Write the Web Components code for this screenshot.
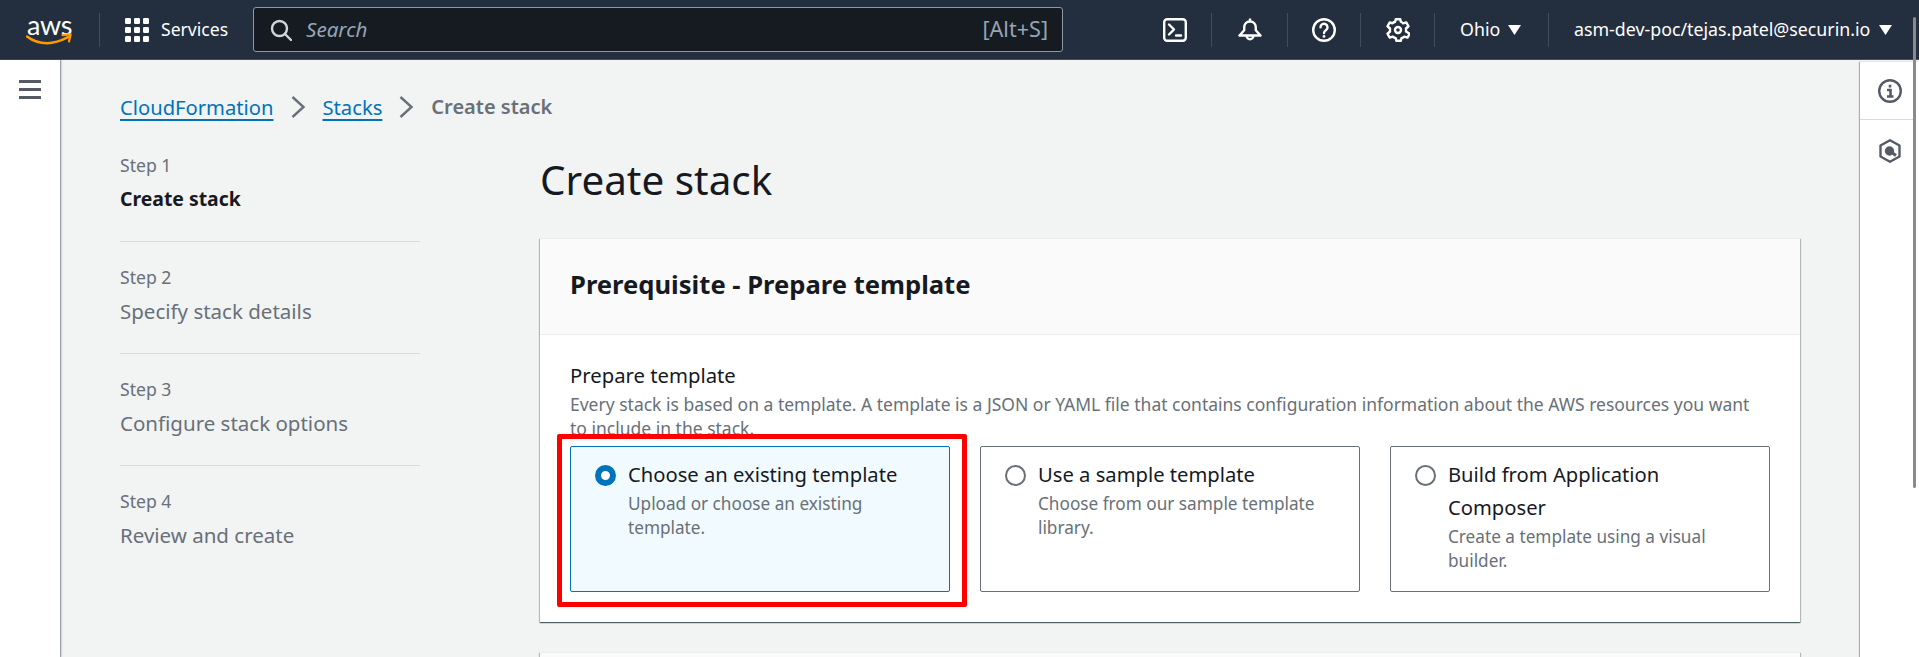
<!DOCTYPE html>
<html lang="en">
<head>
<meta charset="utf-8">
<title>Create stack</title>
<style>
  html, body { margin: 0; height: 100%; overflow: hidden; }
  body { font-family: "Noto Sans", "Open Sans", sans-serif; color: #16191f; background: #f2f3f3; }
  .shell { display: flex; flex-direction: column; height: 657px; position: relative; }
  .row { display: flex; flex: 1; min-height: 0; }
</style>
</head>
<body>
<div class="shell">
  <aws-top-nav></aws-top-nav>
  <div class="row">
    <aws-side-rail></aws-side-rail>
    <aws-page>
      <aws-breadcrumbs slot="crumbs" items="CloudFormation,Stacks" current="Create stack"></aws-breadcrumbs>
      <aws-steps slot="steps"></aws-steps>
      <aws-card heading="Prerequisite - Prepare template">
        <aws-field label="Prepare template" description="Every stack is based on a template. A template is a JSON or YAML file that contains configuration information about the AWS resources you want to include in the stack.">
          <aws-tile checked marked title-text="Choose an existing template" description="Upload or choose an existing template."></aws-tile>
          <aws-tile title-text="Use a sample template" description="Choose from our sample template library."></aws-tile>
          <aws-tile title-text="Build from Application Composer" description="Create a template using a visual builder."></aws-tile>
        </aws-field>
      </aws-card>
      <aws-card stub></aws-card>
    </aws-page>
    <aws-tools-rail></aws-tools-rail>
  </div>
  <aws-scroll-thumb></aws-scroll-thumb>
</div>

<script>
(() => {
  const define = (name, css, html, setup) => {
    const template = document.createElement('template');
    template.innerHTML = `<style>${css}</style>${html}`;
    customElements.define(name, class extends HTMLElement {
      constructor() {
        super();
        this.attachShadow({ mode: 'open' }).append(template.content.cloneNode(true));
      }
      connectedCallback() {
        if (setup) setup(this, this.shadowRoot);
      }
    });
  };

  const attr = (el, name) => el.getAttribute(name) || '';

  define('aws-top-nav', `
    :host { display: flex; align-items: center; flex: none; height: 60px; box-sizing: border-box; background: #232f3e; color: #fff; font-size: 17.8px; border-bottom: 1px solid #414d5c; }
    * { box-sizing: border-box; }
    .cell { display: flex; align-items: center; justify-content: center; height: 34px; flex: none; border-left: 1px solid #414d5c; }
    .logo { width: 99px; height: 34px; flex: none; position: relative; display: block; }
    .logo span { position: absolute; left: 27px; top: -8px; font: 400 27px/40px "Lato", "Noto Sans", sans-serif; letter-spacing: -.4px; }
    .logo svg { position: absolute; left: 26px; top: 20px; }
    .services { width: 154px; justify-content: flex-start; padding-left: 25px; gap: 12px; }
    .services span { line-height: 24px; font-size: 17.6px; margin-bottom: 2px; }
    .search { width: 810px; height: 45px; flex: none; display: flex; align-items: center; background: #161b22; border: 1px solid #8d99a8; border-radius: 3px; padding: 0 14px 0 16px; font-size: 20.6px; color: #95a5b5; }
    .search svg { flex: none; margin-right: 14px; }
    .search em { flex: 1; margin-bottom: 2px; }
    .search span { font-size: 21.6px; margin-bottom: 2px; }
    .icons { display: flex; margin-left: 100px; align-items: center; }
    .icons .first { border-left: 0; width: 48px; justify-content: flex-start; padding-left: 0; }
    svg { display: block; }
    .region { width: 114px; gap: 8px; justify-content: flex-start; padding-left: 25px; }
    .user { width: 365px; gap: 9px; justify-content: flex-start; padding-left: 25px; white-space: nowrap; }
    .region span, .user span { margin-bottom: 2px; }
    .caret { width: 13px; height: 10px; flex: none; }
  `, `
    <a class="logo"><span>aws</span>
      <svg width="46" height="16" viewBox="0 0 46 16" fill="none"><path d="M1 3.500C8 8.800 14.500 10.200 21 10.200 27.500 10.200 34 8.400 42 4.200" stroke="#f90" stroke-width="2.600" stroke-linecap="round"/><path d="M36.500 2.200 44.600 1.400 43 8.400" stroke="#f90" stroke-width="2.200" stroke-linecap="round" stroke-linejoin="round"/></svg>
    </a>
    <div class="cell services">
      <svg width="24" height="24" viewBox="0 0 24 24" fill="#fff"><rect x="0" y="0" width="6" height="6" rx="1.2"/><rect x="9" y="0" width="6" height="6" rx="1.2"/><rect x="18" y="0" width="6" height="6" rx="1.2"/><rect x="0" y="9" width="6" height="6" rx="1.2"/><rect x="9" y="9" width="6" height="6" rx="1.2"/><rect x="18" y="9" width="6" height="6" rx="1.2"/><rect x="0" y="18" width="6" height="6" rx="1.2"/><rect x="9" y="18" width="6" height="6" rx="1.2"/><rect x="18" y="18" width="6" height="6" rx="1.2"/></svg>
      <span>Services</span>
    </div>
    <div class="search">
      <svg width="22" height="22" viewBox="0 0 22 22" fill="none" stroke="#d1d5db" stroke-width="2.400" stroke-linecap="round"><circle cx="9.500" cy="9.500" r="7.500"/><path d="M15 15l6 6"/></svg>
      <em>Search</em><span>[Alt+S]</span>
    </div>
    <div class="icons">
      <div class="cell first"><svg width="24" height="24" viewBox="0 0 24 24" fill="none" stroke="#fff" stroke-width="2.400" stroke-linecap="round" stroke-linejoin="round"><rect x="1.200" y="1.200" width="21.600" height="21.600" rx="3"/><path d="M6 6.500l5 5-5 5M13 17.500h5"/></svg></div>
      <div class="cell" style="width:76px"><svg width="24" height="24" viewBox="0 0 24 24" fill="none" stroke="#fff" stroke-width="2.400" stroke-linejoin="round"><path d="M12 .5v3M12 3.500c-3.600 0-5.800 2.600-5.800 6.200v2.500L1.500 17.500h21l-4.700-5.300V9.700c0-3.600-2.200-6.200-5.800-6.200z"/><path d="M8.600 17.800a3.400 3.400 0 1 0 6.800 0"/></svg></div>
      <div class="cell" style="width:73px"><svg width="24" height="24" viewBox="0 0 24 24" fill="none" stroke="#fff" stroke-width="2.400" stroke-linecap="round"><circle cx="12" cy="12" r="10.800"/><path d="M8.500 9.300a3.500 3.500 0 1 1 5.600 2.800c-1.300.9-2.100 1.500-2.100 3"/><path d="M12 18.300v.1" stroke-width="2.800"/></svg></div>
      <div class="cell" style="width:74px"><svg width="24" height="24" viewBox="0 0 16 16" fill="none" stroke="#fff" stroke-width="1.600" stroke-linejoin="round"><circle cx="8" cy="8" r="2"/><path d="M13.400 8c0-.34-.03-.67-.09-1L15 5.500l-1.500-2.600-2.100.63A5.500 5.500 0 0 0 9.900 2.500L9.500.8h-3L6.100 2.500c-.7.2-1.300.6-1.900 1L2.500 2.900 1 5.500 2.700 7a5.700 5.700 0 0 0 0 2L1 10.500l1.500 2.600 2.100-.63c.6.500 1.200.8 1.900 1l.4 1.700h3l.4-1.700c.7-.2 1.300-.5 1.900-1l2.100.63 1.500-2.600L13.300 9c.06-.33.1-.66.1-1z"/></svg></div>
      <div class="cell region"><span>Ohio</span><svg class="caret" viewBox="0 0 13 10" fill="#fff"><path d="M0 0h13L6.500 10z"/></svg></div>
      <div class="cell user"><span>asm-dev-poc/tejas.patel@securin.io</span><svg class="caret" viewBox="0 0 13 10" fill="#fff"><path d="M0 0h13L6.500 10z"/></svg></div>
    </div>
  `);

  define('aws-side-rail', `
    :host { display: block; flex: none; width: 60px; background: #fff; box-shadow: 1px 0 1px rgba(0,28,36,.3), 2px 0 2px rgba(0,28,36,.1); position: relative; z-index: 1; padding-top: 20px; box-sizing: border-box; }
    svg { display: block; margin-left: 19px; }
  `, `<svg width="22" height="20" viewBox="0 0 22 20" fill="#545b64"><rect y="0" width="22" height="3"/><rect y="8" width="22" height="3"/><rect y="16" width="22" height="3"/></svg>`);

  define('aws-page', `
    :host { display: grid; flex: 1; min-width: 0; grid-template-columns: 300px 1260px; column-gap: 120px; grid-template-rows: auto 1fr; padding: 0 60px; overflow: hidden; box-sizing: border-box; align-content: start; }
    .crumbs { grid-column: 1 / -1; }
    h1 { margin: 0; font-size: 40.4px; font-weight: 400; line-height: 48px; padding-top: 22px; height: 82px; color: #16191f; }
    .steps { min-width: 0; }
  `, `
    <div class="crumbs"><slot name="crumbs"></slot></div>
    <div class="steps"><slot name="steps"></slot></div>
    <div class="main"><h1>Create stack</h1><slot></slot></div>
  `);

  define('aws-breadcrumbs', `
    :host { display: flex; align-items: center; height: 54px; padding-top: 20px; font-size: 20.2px; line-height: 28px; }
    a { color: #0073bb; text-decoration: underline; text-underline-offset: 4px; text-decoration-thickness: 2px; }
    svg { margin: 0 17px; flex: none; display: block; }
    b { color: #687078; font-weight: 600; font-size: 20px; }
  `, `<span id="list" style="display:contents"></span>`, (el, root) => {
    const list = root.getElementById('list');
    const chevron = '<svg width="15" height="22" viewBox="0 0 15 22" fill="none" stroke="#687078" stroke-width="2.400"><path d="M1.500 1l11 10-11 10"/></svg>';
    const items = attr(el, 'items').split(',');
    list.innerHTML = items.map((item) => `<a>${item}</a>${chevron}`).join('') + `<b>${attr(el, 'current')}</b>`;
  });

  define('aws-steps', `
    :host { display: block; padding-top: 19px; }
    .step { height: 112px; padding-top: 23px; box-sizing: border-box; border-bottom: 1px solid #d5dbdb; }
    .step.active { height: 89px; padding-top: 0; }
    .step:last-child { border-bottom: 0; }
    small { display: block; font-size: 17.6px; line-height: 24px; color: #687078; padding-bottom: 8px; }
    span { display: block; font-size: 20.5px; line-height: 28px; color: #687078; }
    .active span { color: #16191f; font-weight: 700; font-size: 19.4px; }
  `, `
    <div class="step active"><small>Step 1</small><span>Create stack</span></div>
    <div class="step"><small>Step 2</small><span>Specify stack details</span></div>
    <div class="step"><small>Step 3</small><span>Configure stack options</span></div>
    <div class="step"><small>Step 4</small><span>Review and create</span></div>
  `);

  define('aws-card', `
    :host { display: block; background: #fff; border-top: 1px solid #eaeded; box-shadow: 0 1px 1px 0 rgba(0,28,36,.5), 1px 1px 1px 0 rgba(0,28,36,.2), -1px 1px 1px 0 rgba(0,28,36,.2); margin-bottom: 30px; }
    header { background: #fafafa; border-bottom: 1px solid #eaeded; height: 96px; box-sizing: border-box; padding: 0 30px 4px; display: flex; align-items: center; }
    h2 { margin: 0; font-size: 25.6px; line-height: 30px; font-weight: 700; color: #16191f; }
    .body { padding: 23px 30px 30px; }
    :host([stub]) { height: 60px; }
    :host([stub]) header { height: 60px; }
  `, `<header><h2></h2></header><div class="body"><slot></slot></div>`, (el, root) => {
    root.querySelector('h2').textContent = attr(el, 'heading');
    if (el.hasAttribute('stub')) root.querySelector('.body').remove();
  });

  define('aws-field', `
    :host { display: block; }
    label { display: block; font-size: 20.3px; line-height: 34px; color: #16191f; }
    p { margin: 0; font-size: 17.5px; line-height: 24px; color: #687078; }
    .tiles { display: grid; grid-template-columns: repeat(3, 1fr); column-gap: 30px; margin-top: 6px; }
  `, `<label></label><p></p><div class="tiles"><slot></slot></div>`, (el, root) => {
    root.querySelector('label').textContent = attr(el, 'label');
    root.querySelector('p').textContent = attr(el, 'description');
  });

  define('aws-tile', `
    :host { display: flex; position: relative; box-sizing: border-box; height: 146px; padding: 11px 24px 0; gap: 12px; border: 1px solid #687078; border-radius: 2px; background: #fff; }
    :host([checked]) { border-color: #0073bb; background: #f1faff; }
    .radio { flex: none; width: 21px; height: 21px; margin-top: 7px; box-sizing: border-box; border: 2px solid #687078; border-radius: 50%; background: #fff; }
    :host([checked]) .radio { border: 6px solid #0073bb; }
    .title { font-size: 20.2px; line-height: 33px; color: #16191f; }
    .desc { font-size: 17.2px; line-height: 24px; color: #687078; margin-top: 1px; }
    .mark { position: absolute; left: -14px; right: -18px; top: -13px; bottom: -16px; border: 5px solid #f00; border-radius: 2px; pointer-events: none; }
  `, `<div class="radio"></div><div><div class="title"></div><div class="desc"></div></div>`, (el, root) => {
    root.querySelector('.title').textContent = attr(el, 'title-text');
    root.querySelector('.desc').textContent = attr(el, 'description');
    if (el.hasAttribute('marked')) {
      const mark = document.createElement('div');
      mark.className = 'mark';
      root.append(mark);
    }
  });

  define('aws-tools-rail', `
    :host { display: block; flex: none; width: 59px; background: #fff; margin-top: 2px; box-shadow: -1px 0 1px rgba(0,28,36,.3); position: relative; z-index: 1; }
    div { height: 58px; display: flex; align-items: center; padding-left: 18px; box-sizing: border-box; }
    .info { border-bottom: 1px solid #d5dbdb; margin-right: 5px; }
    div + div { height: 62px; }
    svg { display: block; }
  `, `
    <div class="info"><svg width="24" height="24" viewBox="0 0 24 24" fill="none" stroke="#545b64" stroke-width="2.400"><circle cx="12" cy="12" r="10.800"/><path d="M12 5.800v2.800M9 11h3.500v6.500M9 17.500h6.500" stroke-width="2.600"/></svg></div>
    <div><svg width="24" height="24" viewBox="0 0 24 24" fill="none" stroke="#545b64" stroke-width="2.400" stroke-linejoin="round"><path d="M12 1.300 21.500 6.500v11L12 22.700 2.500 17.500v-11z"/><circle cx="11.500" cy="12" r="3.500" fill="#545b64"/><path d="M13 13l5 3.500" stroke-width="3"/></svg></div>
  `);

  // native scrollbar thumb that sits over the page in the screenshot
  define('aws-scroll-thumb', `
    :host { display: block; position: absolute; left: 1913px; top: 17px; width: 3px; height: 471px; background: #8a8a8a; border-radius: 2px; z-index: 2; }
  `, ``);
})();
</script>
</body>
</html>
